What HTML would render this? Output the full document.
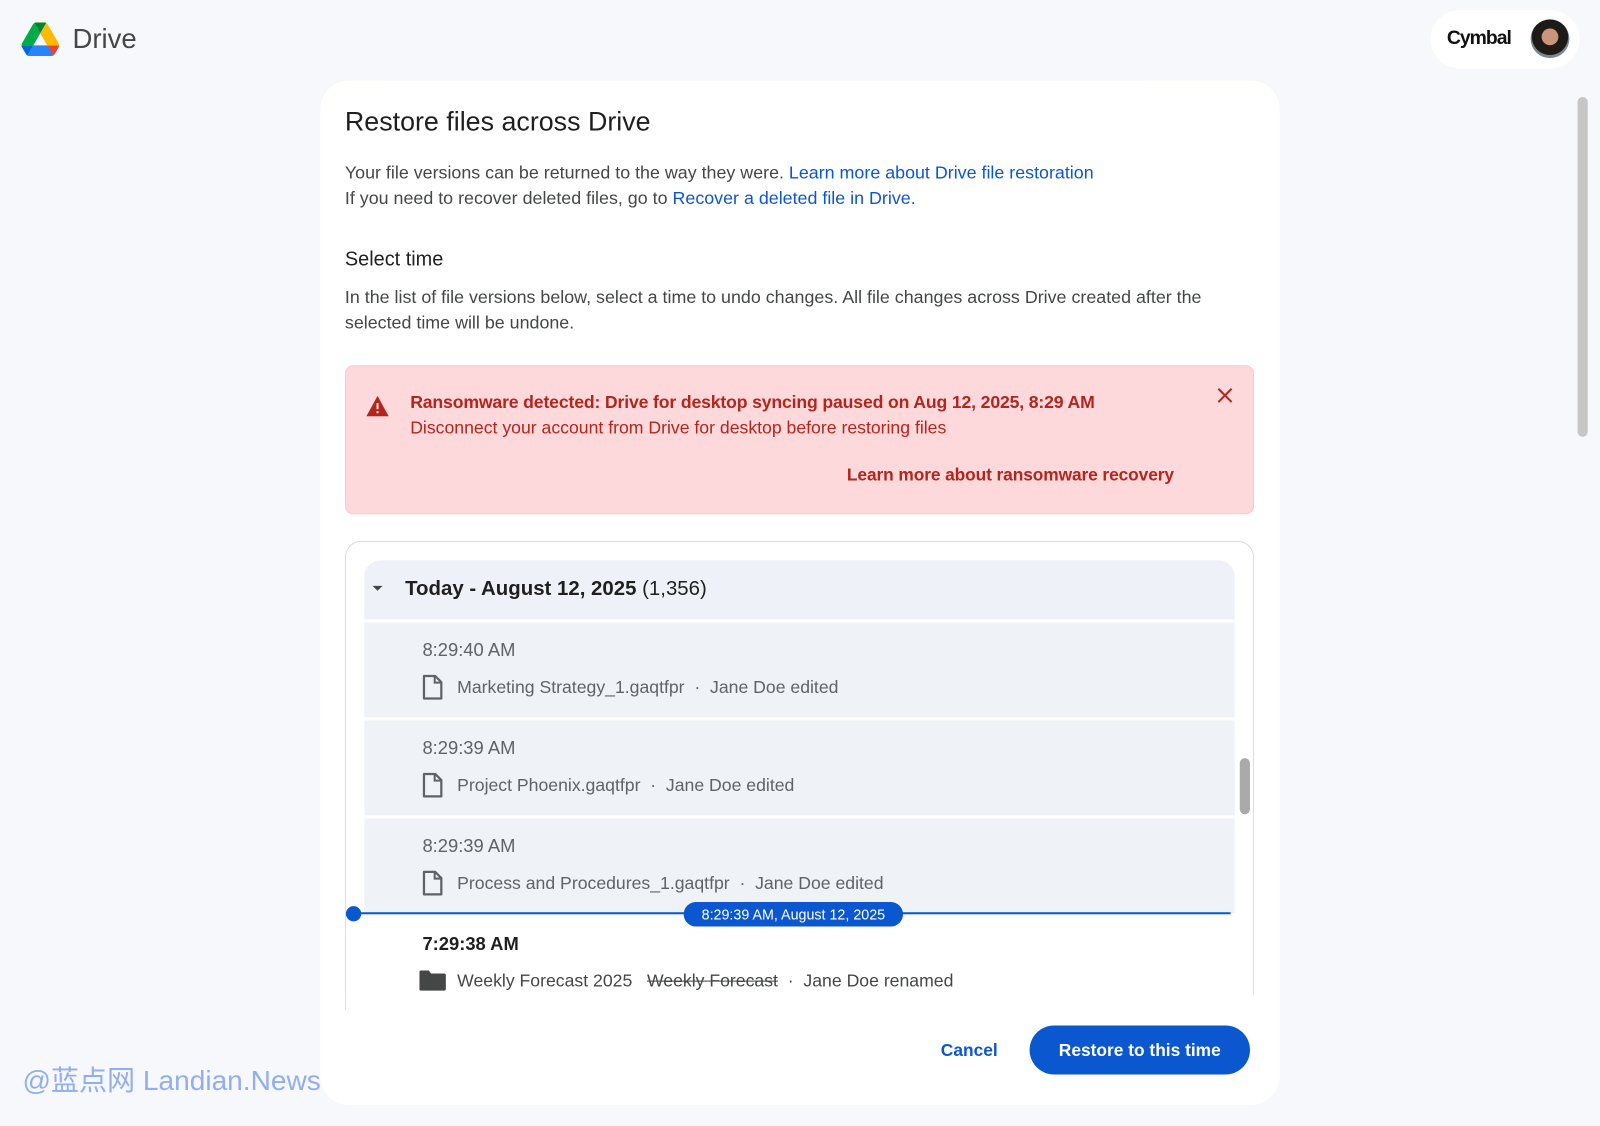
<!DOCTYPE html>
<html><head><meta charset="utf-8"><style>
*{margin:0;padding:0;box-sizing:border-box}
html,body{width:1600px;height:1125px;overflow:hidden;background:#f7f8fc;font-family:"Liberation Sans",Arial,sans-serif}
#w{position:absolute;left:0;top:0;width:1568px;height:1103px;transform:scale(1.0204);transform-origin:0 0}
.a{position:absolute;white-space:nowrap}
a{color:#0b57d0;text-decoration:none}
.row{position:absolute;left:357px;width:853px;height:93px;background:#eff2f7}
.t{position:absolute;left:57px;top:17px;font-size:18px;color:#5f6368}
.f{position:absolute;left:91px;top:53px;font-size:17.3px;color:#5f6368}
.ic{position:absolute;left:57px;top:51px}
</style></head><body><div id="w">
<svg class="a" style="left:21px;top:22px" width="37" height="33" viewBox="0 0 87.3 78"><path d="M6.6 66.85l3.85 6.65c.8 1.4 1.950 2.5 3.3 3.3L27.5 53H0c0 1.55.4 3.1 1.2 4.5z" fill="#0066da"/><path d="M43.65 25L29.9 1.2c-1.35.8-2.5 1.9-3.3 3.3l-25.4 44A9.06 9.06 0 000 53h27.5z" fill="#00ac47"/><path d="M73.55 76.8c1.35-.8 2.5-1.9 3.3-3.3l1.6-2.75 7.65-13.25c.8-1.4 1.2-2.95 1.2-4.5H59.8l5.85 11.5z" fill="#ea4335"/><path d="M43.65 25L57.4 1.2C56.05.4 54.5 0 52.9 0H34.4c-1.6 0-3.15.45-4.5 1.2z" fill="#00832d"/><path d="M59.8 53H27.5L13.75 76.8c1.35.8 2.9 1.2 4.5 1.2h50.8c1.6 0 3.15-.45 4.5-1.2z" fill="#2684fc"/><path d="M73.4 26.5L60.7 4.5c-.8-1.4-1.95-2.5-3.3-3.3L43.65 25 59.8 53h27.45c0-1.55-.4-3.1-1.2-4.5z" fill="#ffba00"/></svg>
<div class="a" style="left:71px;top:23px;font-size:27px;color:#444746">Drive</div>
<div class="a" style="left:1402px;top:10px;width:146px;height:57px;background:#fff;border-radius:29px"></div>
<div class="a" style="left:1418px;top:27px;font-size:19px;font-weight:bold;color:#111;letter-spacing:-1px">Cymbal</div>
<div class="a" style="left:1500px;top:19px;width:38px;height:38px;border-radius:50%;background:radial-gradient(circle at 50% 45%,#c9967a 0 28%,#1e1a18 30% 62%,#7a8a8c 64%)"></div>
<div class="a" style="left:1546px;top:95px;width:10px;height:333px;background:#c6c6c6;border-radius:5px"></div>

<div class="a" style="left:314px;top:79px;width:940px;height:1004px;background:#fff;border-radius:28px"></div>
<div class="a" style="left:338px;top:104px;font-size:26.3px;color:#1f1f1f">Restore files across Drive</div>
<div class="a" style="left:338px;top:157px;font-size:17.5px;color:#444746;line-height:25px">Your file versions can be returned to the way they were. <a>Learn more about Drive file restoration</a><br>If you need to recover deleted files, go to <a>Recover a deleted file in Drive.</a></div>
<div class="a" style="left:338px;top:243px;font-size:19.5px;color:#1f1f1f">Select time</div>
<div class="a" style="left:338px;top:279px;font-size:17.5px;color:#444746;line-height:25px">In the list of file versions below, select a time to undo changes. All file changes across Drive created after the<br>selected time will be undone.</div>

<div class="a" style="left:338px;top:358px;width:891px;height:146px;background:#fdd9dc;border-radius:8px;border:1px solid #f9c9cd"></div>
<svg class="a" style="left:359px;top:388px" width="22" height="20" viewBox="0 0 22 20"><path d="M11 0L22 20H0z" fill="#b3261e"/><rect x="10" y="7" width="2" height="6" fill="#fdd9dc"/><rect x="10" y="15" width="2" height="2" fill="#fdd9dc"/></svg>
<div class="a" style="left:402px;top:382px;font-size:17.3px;color:#b3261e;line-height:25px"><b style="font-weight:600;letter-spacing:-0.15px">Ransomware detected: Drive for desktop syncing paused on Aug 12, 2025, 8:29 AM</b><br>Disconnect your account from Drive for desktop before restoring files</div>
<svg class="a" style="left:1193px;top:380px" width="15" height="15" viewBox="0 0 15 15"><path d="M1 1L14 14M14 1L1 14" stroke="#b3261e" stroke-width="2"/></svg>
<div class="a" style="left:830px;top:456px;font-size:17px;color:#b3261e;font-weight:600;letter-spacing:-0.1px">Learn more about ransomware recovery</div>

<div class="a" style="left:338px;top:530px;width:891px;height:460px;border:1px solid #dadce0;border-bottom:none;border-radius:16px 16px 0 0"></div>
<div class="a" style="left:339px;top:975px;width:892px;height:20px;background:#fff"></div>
<div class="a" style="left:357px;top:549px;width:853px;height:58px;background:#eef2f8;border-radius:16px 16px 0 0"></div>
<svg class="a" style="left:365px;top:574px" width="10" height="6"><path d="M0 0H10L5 5z" fill="#444"/></svg>
<div class="a" style="left:397px;top:566px;font-size:20px;color:#1f1f1f"><b style="font-weight:600">Today - August 12, 2025</b> (1,356)</div>

<div class="row" style="top:610px"><div class="t">8:29:40 AM</div><svg class="ic" width="20" height="25" viewBox="0 0 20 25"><path d="M1.5 1.5H12.5L18.5 7.5V23.5H1.5Z" fill="none" stroke="#5f6368" stroke-width="2.2" stroke-linejoin="round"/><path d="M12 1.5V8H18.5" fill="none" stroke="#5f6368" stroke-width="2"/></svg><div class="f">Marketing Strategy_1.gaqtfpr &nbsp;·&nbsp; Jane Doe edited</div></div>
<div class="row" style="top:706px"><div class="t">8:29:39 AM</div><svg class="ic" width="20" height="25" viewBox="0 0 20 25"><path d="M1.5 1.5H12.5L18.5 7.5V23.5H1.5Z" fill="none" stroke="#5f6368" stroke-width="2.2" stroke-linejoin="round"/><path d="M12 1.5V8H18.5" fill="none" stroke="#5f6368" stroke-width="2"/></svg><div class="f">Project Phoenix.gaqtfpr &nbsp;·&nbsp; Jane Doe edited</div></div>
<div class="row" style="top:802px"><div class="t">8:29:39 AM</div><svg class="ic" width="20" height="25" viewBox="0 0 20 25"><path d="M1.5 1.5H12.5L18.5 7.5V23.5H1.5Z" fill="none" stroke="#5f6368" stroke-width="2.2" stroke-linejoin="round"/><path d="M12 1.5V8H18.5" fill="none" stroke="#5f6368" stroke-width="2"/></svg><div class="f">Process and Procedures_1.gaqtfpr &nbsp;·&nbsp; Jane Doe edited</div></div>

<div class="a" style="left:346px;top:894px;width:860px;height:2px;background:#0b57d0"></div>
<div class="a" style="left:339px;top:888px;width:15px;height:15px;border-radius:50%;background:#0b57d0"></div>
<div class="a" style="left:670px;top:884px;width:215px;height:24px;border-radius:12px;background:#0b57d0;color:#fff;font-size:14px;text-align:center;line-height:24px">8:29:39 AM, August 12, 2025</div>

<div class="a" style="left:414px;top:915px;font-size:18px;color:#1f1f1f;font-weight:600">7:29:38 AM</div>
<svg class="a" style="left:411px;top:951px" width="26" height="20" viewBox="0 0 26 20"><path d="M0 2Q0 0 2 0H9L11.5 3H24Q26 3 26 5V18Q26 20 24 20H2Q0 20 0 18Z" fill="#444746"/></svg>
<div class="a" style="left:448px;top:951px;font-size:17.3px;color:#444746">Weekly Forecast 2025 &nbsp;&nbsp;<s>Weekly Forecast</s> &nbsp;·&nbsp; Jane Doe renamed</div>

<div class="a" style="left:1215px;top:743px;width:10px;height:55px;border-radius:5px;background:#aaa"></div>

<div class="a" style="left:922px;top:1020px;font-size:17px;color:#0b57d0;font-weight:600">Cancel</div>
<div class="a" style="left:1009px;top:1005px;width:216px;height:48px;border-radius:24px;background:#0b57d0;color:#fff;font-size:17px;font-weight:600;text-align:center;line-height:49px">Restore to this time</div>

<div class="a" style="left:22px;top:1036px;font-size:27.5px;color:#7fa2f0;opacity:.85;font-family:'Liberation Sans','Noto Sans CJK SC',sans-serif">@蓝点网 Landian.News</div>
</div></body></html>
